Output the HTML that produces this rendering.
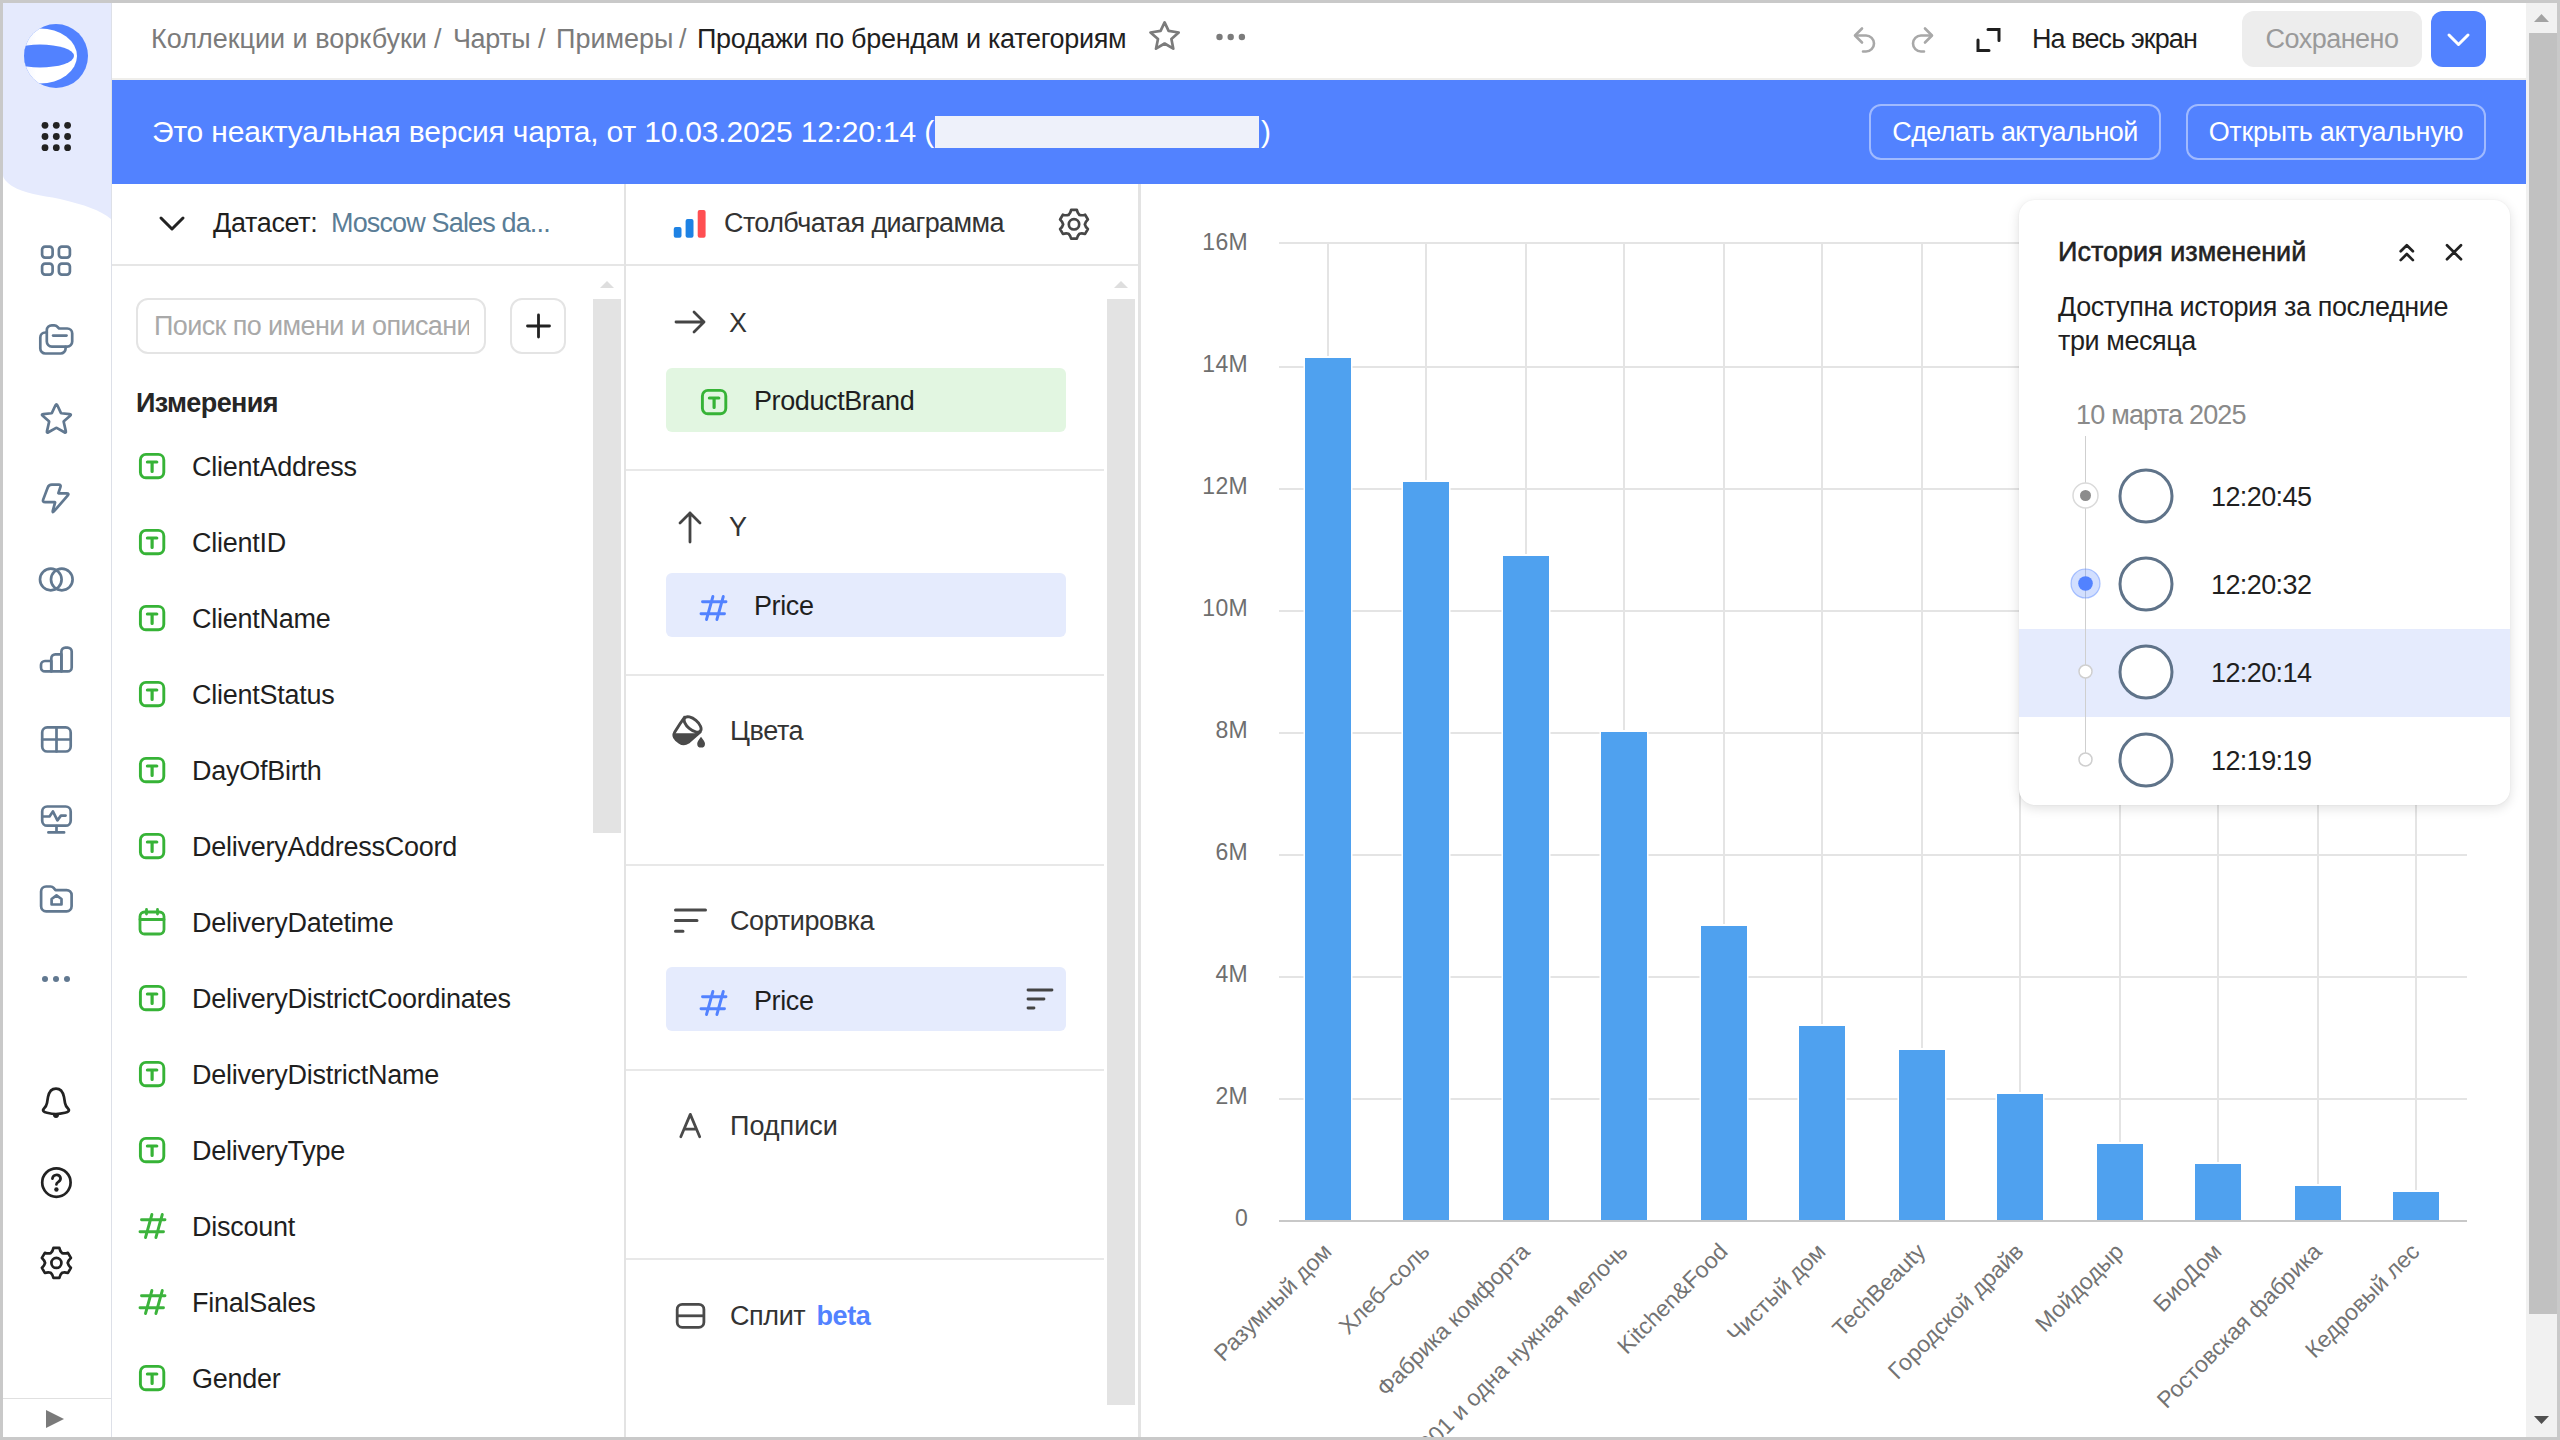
<!DOCTYPE html>
<html><head><meta charset="utf-8">
<style>
*{box-sizing:border-box;margin:0;padding:0}
html,body{width:2560px;height:1440px;overflow:hidden;background:#fff;font-family:"Liberation Sans",sans-serif;color:#1f1f1f;position:relative}
.a{position:absolute}
.t{position:absolute;white-space:nowrap;line-height:32px;font-size:27px}
.ic{position:absolute;overflow:visible}
</style></head><body>
<!-- SIDEBAR -->
<svg class="a" style="left:0;top:0" width="112" height="1440" viewBox="0 0 112 1440">
  <path d="M3,3 H111 V219 C100,210 85,205 60,199 C40,195 25,194 12,186 C6,182 3,178 3,175 Z" fill="#e5eafd"/>
  <rect x="111" y="0" width="1" height="1440" fill="#dde0e8"/>
  <defs>
    <clipPath id="lc"><circle cx="56" cy="56" r="32"/></clipPath>
    <linearGradient id="lg" x1="0" x2="1" y1="0" y2="0"><stop offset="0" stop-color="#dfe7fd"/><stop offset="0.45" stop-color="#fff"/></linearGradient>
  </defs>
  <g clip-path="url(#lc)">
    <rect x="20" y="20" width="72" height="72" fill="#5282ff"/>
    <ellipse cx="40" cy="56" rx="37" ry="27.5" fill="url(#lg)"/>
    <ellipse cx="40" cy="56" rx="34" ry="11.5" fill="#5282ff"/>
  </g>
  <g fill="#222">
    <circle cx="45" cy="125.3" r="3.4"/><circle cx="56.3" cy="125.3" r="3.4"/><circle cx="67.6" cy="125.3" r="3.4"/>
    <circle cx="45" cy="136.5" r="3.4"/><circle cx="56.3" cy="136.5" r="3.4"/><circle cx="67.6" cy="136.5" r="3.4"/>
    <circle cx="45" cy="147.7" r="3.4"/><circle cx="56.3" cy="147.7" r="3.4"/><circle cx="67.6" cy="147.7" r="3.4"/>
  </g>
  <g fill="none" stroke="#617890" stroke-width="2.7" stroke-linecap="round" stroke-linejoin="round">
    <rect x="42.1" y="246.6" width="10.5" height="11" rx="3"/><rect x="58.9" y="246.6" width="11" height="11" rx="3"/>
    <rect x="42.1" y="263.6" width="10.5" height="11" rx="3"/><rect x="58.9" y="263.6" width="11" height="11" rx="3"/>
    <path d="M46.8,332.5 h-1.5 a5,5 0 0 0 -5,5 v11 a5,5 0 0 0 5,5 h15.3 a5,5 0 0 0 5,-5 v-1.7"/>
    <path d="M46.8,330.3 a5,5 0 0 1 5,-5 h2.5 a4,4 0 0 1 3,1.4 l1.8,1.8 h8.1 a5,5 0 0 1 5,5 v8.1 a5,5 0 0 1 -5,5 h-15.4 a5,5 0 0 1 -5,-5 z"/>
    <path d="M53.1,335.6 h13.4"/>
    <path d="M55.47,405.30 Q56.40,403.30 57.33,405.30 L60.87,412.93 Q61.00,413.20 61.30,413.23 L69.61,414.08 Q71.80,414.30 70.15,415.75 L63.83,421.30 Q63.60,421.50 63.67,421.79 L65.81,431.16 Q66.30,433.30 64.39,432.22 L56.66,427.85 Q56.40,427.70 56.14,427.85 L48.41,432.22 Q46.50,433.30 46.99,431.16 L49.13,421.79 Q49.20,421.50 48.97,421.30 L42.65,415.75 Q41.00,414.30 43.19,414.08 L51.50,413.23 Q51.80,413.20 51.93,412.93 Z"/>
    <path d="M47.75,487.41 Q48.80,484.60 51.80,484.60 L58.70,484.60 Q61.20,484.60 60.42,486.97 L58.46,492.93 Q58.30,493.40 58.80,493.40 L66.60,493.40 Q69.60,493.40 67.63,495.66 L54.30,510.96 Q52.00,513.60 52.95,510.23 L55.06,502.68 Q55.20,502.20 54.70,502.20 L45.20,502.20 Q42.20,502.20 43.25,499.39 Z"/>
    <circle cx="50.8" cy="579.5" r="10.8"/><circle cx="61.8" cy="579.5" r="10.8"/>
    <path d="M51.3,671.4 H45 a4,4 0 0 1 -4,-4 v-2.4 a4,4 0 0 1 4,-4 h6.3 z"/>
    <path d="M51.3,671.4 V658.4 a4,4 0 0 1 4,-4 h6.1 V671.4 z"/>
    <path d="M61.4,671.4 V651.6 a4,4 0 0 1 4,-4 h2.3 a4,4 0 0 1 4,4 v15.8 a4,4 0 0 1 -4,4 z"/>
    <rect x="42.2" y="727.4" width="28.5" height="24.1" rx="5"/><path d="M56.5,727.4 v24.1 M42.2,739.5 h28.5"/>
    <rect x="42.2" y="806.5" width="28.5" height="19.2" rx="5"/><path d="M56.5,826 v6 M48.4,832.4 h15.7 M42.5,816.5 h7 l3.4,-5.1 l4.5,9 l3.5,-4.8 h4.7"/>
    <path d="M41.1,891.5 a5,5 0 0 1 5,-5 h4.5 a4,4 0 0 1 3,1.4 l1.9,2.2 h11.1 a5,5 0 0 1 5,5 v11.2 a5,5 0 0 1 -5,5 h-20.5 a5,5 0 0 1 -5,-5 z"/>
    <path d="M51.6,904.5 v-5.5 l4.9,-3.7 l5,3.7 v5.5 z"/>
  </g>
  <g fill="#617890"><circle cx="45" cy="979" r="3"/><circle cx="56" cy="979" r="3"/><circle cx="67" cy="979" r="3"/></g>
  <g fill="none" stroke="#222" stroke-width="2.7" stroke-linecap="round" stroke-linejoin="round">
    <path d="M56,1088.6 C51,1088.6 49,1092 48,1097 L47,1103 C46.5,1106 45,1107.5 44,1108.5 C42,1110.5 43.5,1112 47,1112.8 C50,1113.5 53,1114 56,1114 C59,1114 62,1113.5 65,1112.8 C68.5,1112 70,1110.5 68,1108.5 C67,1107.5 65.5,1106 65,1103 L64,1097 C63,1092 61,1088.6 56,1088.6 Z"/>
    <circle cx="56.4" cy="1182.6" r="14.2"/>
    <path d="M52.4,1178.7 a4.2,4.2 0 0 1 8,-1.3 c0.6,1.9 -0.3,3.3 -2,4.5 c-1.3,0.9 -2,1.4 -2,2.6"/>
    <circle cx="56.4" cy="1262.9" r="5"/>
    <path d="M53.48,1247.88 L59.32,1247.88 C60.00,1251.14 60.00,1251.14 62.05,1253.11 C64.79,1253.90 64.79,1253.90 67.95,1252.86 L70.87,1257.92 C68.38,1260.13 68.38,1260.13 67.70,1262.90 C68.38,1265.67 68.38,1265.67 70.87,1267.88 L67.95,1272.94 C64.79,1271.90 64.79,1271.90 62.05,1272.69 C60.00,1274.66 60.00,1274.66 59.32,1277.92 L53.48,1277.92 C52.80,1274.66 52.80,1274.66 50.75,1272.69 C48.01,1271.90 48.01,1271.90 44.85,1272.94 L41.93,1267.88 C44.42,1265.67 44.42,1265.67 45.10,1262.90 C44.42,1260.13 44.42,1260.13 41.93,1257.92 L44.85,1252.86 C48.01,1253.90 48.01,1253.90 50.75,1253.11 C52.80,1251.14 52.80,1251.14 53.48,1247.88 Z"/>
  </g>
  <path d="M52.5,1114 H59.5 L58.6,1116.6 a3,3 0 0 1 -5.2,0 Z" fill="#222"/>
  <circle cx="56.4" cy="1189.5" r="2.2" fill="#222"/>
  <rect x="3" y="1398" width="108" height="1" fill="#e0e0e0"/>
  <path d="M46,1410 L64,1419 L46,1428 Z" fill="#7a7a7a"/>
</svg>

<!-- TOP BAR -->
<div class="a" style="left:112px;top:78px;width:2414px;height:2px;background:#efeeeb"></div>
<div class="t" style="left:151px;top:23px;color:#7b7b7b;letter-spacing:0px">Коллекции и воркбуки</div>
<div class="t" style="left:434px;top:23px;color:#7b7b7b">/</div>
<div class="t" style="left:453px;top:23px;color:#7b7b7b;letter-spacing:-0.4px">Чарты</div>
<div class="t" style="left:538px;top:23px;color:#7b7b7b">/</div>
<div class="t" style="left:556px;top:23px;color:#7b7b7b;letter-spacing:0px">Примеры</div>
<div class="t" style="left:679px;top:23px;color:#7b7b7b">/</div>
<div class="t" style="left:697px;top:23px;color:#1f1f1f;letter-spacing:-0.3px">Продажи по брендам и категориям</div>


<svg class="ic" style="left:1140px;top:10px" width="120" height="60" viewBox="1140 10 120 60"><path d="M1164.6,22.4 L1168.6,30.9 L1178.7,32.5 L1171.4,39 L1173.3,48.7 L1164.6,43.5 L1156,48.7 L1158,39 L1150.5,32.5 L1160.6,30.9 Z" fill="none" stroke="#7b7b7b" stroke-width="2.7" stroke-linejoin="round"/><circle cx="1219.5" cy="37" r="3.2" fill="#7b7b7b"/><circle cx="1230.7" cy="37" r="3.2" fill="#7b7b7b"/><circle cx="1241.9" cy="37" r="3.2" fill="#7b7b7b"/></svg>
<!-- undo redo fullscreen -->
<svg class="a" style="left:1840px;top:10px" width="180" height="60" viewBox="1840 10 180 60">
 <g fill="none" stroke="#a8a8a8" stroke-width="2.6" stroke-linecap="round" stroke-linejoin="round">
  <path d="M1862,28.5 l-7,7 l7,7"/><path d="M1856,35.5 h10 a8,8 0 0 1 0,16 h-3"/>
  <path d="M1925,28.5 l7,7 l-7,7"/><path d="M1931,35.5 h-10 a8,8 0 0 0 0,16 h3"/>
 </g>
 <g fill="none" stroke="#1f1f1f" stroke-width="3" stroke-linecap="round" stroke-linejoin="miter">
  <path d="M1988,29.5 h11 v11"/><path d="M1978,40 v10.5 h11"/>
 </g>
</svg>
<div class="t" style="left:2032px;top:23px;letter-spacing:-0.9px">На весь экран</div>
<div class="a" style="left:2242px;top:11px;width:180px;height:56px;border-radius:12px;background:#ededed"></div>
<div class="t" style="left:2242px;top:23px;width:180px;text-align:center;color:#9a9a9a;letter-spacing:-0.5px">Сохранено</div>
<div class="a" style="left:2431px;top:11px;width:55px;height:56px;border-radius:12px;background:#5282ff"></div>
<svg class="a" style="left:2431px;top:11px" width="55" height="56"><path d="M18,24 l9.5,9.5 l9.5,-9.5" fill="none" stroke="#fff" stroke-width="3" stroke-linecap="round" stroke-linejoin="round"/></svg>

<!-- BANNER -->
<div class="a" style="left:112px;top:80px;width:2414px;height:104px;background:#5282ff"></div>
<div class="t" style="left:152px;top:115px;font-size:30px;line-height:34px;color:#fff;letter-spacing:-0.18px">Это неактуальная версия чарта, от 10.03.2025 12:20:14 (</div>
<div class="a" style="left:935px;top:116px;width:324px;height:32px;background:#eef1fa"></div>
<div class="t" style="left:1261px;top:115px;font-size:30px;line-height:34px;color:#fff">)</div>
<div class="a" style="left:1869px;top:104px;width:292px;height:56px;border-radius:12px;border:2px solid rgba(255,255,255,0.45)"></div>
<div class="t" style="left:1869px;top:116px;width:292px;text-align:center;color:#fff;letter-spacing:-0.6px">Сделать актуальной</div>
<div class="a" style="left:2186px;top:104px;width:300px;height:56px;border-radius:12px;border:2px solid rgba(255,255,255,0.45)"></div>
<div class="t" style="left:2186px;top:116px;width:300px;text-align:center;color:#fff;letter-spacing:-0.3px">Открыть актуальную</div>


<!-- LEFT PANEL -->
<div class="a" style="left:624px;top:184px;width:2px;height:1253px;background:#e3e3e3"></div>
<div class="a" style="left:112px;top:264px;width:512px;height:2px;background:#e6e6e6"></div>
<svg class="ic" style="left:156px;top:210px" width="32" height="28"><path d="M5,8 L16,19 L27,8" fill="none" stroke="#222" stroke-width="3" stroke-linecap="round" stroke-linejoin="round"/></svg>
<div class="t" style="left:213px;top:207px;letter-spacing:-0.35px">Датасет:</div>
<div class="t" style="left:331px;top:207px;color:#5a7d96;letter-spacing:-0.85px">Moscow Sales da...</div>
<div class="a" style="left:136px;top:298px;width:350px;height:56px;border:2px solid #e4e4e4;border-radius:12px"></div>
<div class="t" style="left:154px;top:310px;color:#a9a9a9;letter-spacing:-0.6px;width:315px;overflow:hidden">Поиск по имени и описани</div>
<div class="a" style="left:510px;top:298px;width:56px;height:56px;border:2px solid #e4e4e4;border-radius:12px"></div>
<svg class="ic" style="left:511px;top:299px" width="55" height="54"><path d="M27.5,16 V38 M16.5,27 H38.5" stroke="#222" stroke-width="2.8" stroke-linecap="round"/></svg>
<div class="a" style="left:593px;top:299px;width:28px;height:534px;background:#e3e3e3"></div>
<svg class="ic" style="left:593px;top:276px" width="28" height="16"><path d="M7,12 L14,5 L21,12 Z" fill="#dedede"/></svg>
<div class="t" style="left:136px;top:387px;font-weight:bold;letter-spacing:-0.6px;color:#262626">Измерения</div>
<svg class="ic" style="left:138px;top:452px" width="28" height="28" viewBox="0 0 28 28"><rect x="2.4" y="2.4" width="23.4" height="23.4" rx="5.5" fill="none" stroke="#36b336" stroke-width="2.9"/><path d="M9.4,10 h9.4 M14.1,10 v9.4" stroke="#36b336" stroke-width="3.2" fill="none" stroke-linecap="round"/></svg>
<div class="t" style="left:192px;letter-spacing:-0.25px;top:451px">ClientAddress</div>
<svg class="ic" style="left:138px;top:528px" width="28" height="28" viewBox="0 0 28 28"><rect x="2.4" y="2.4" width="23.4" height="23.4" rx="5.5" fill="none" stroke="#36b336" stroke-width="2.9"/><path d="M9.4,10 h9.4 M14.1,10 v9.4" stroke="#36b336" stroke-width="3.2" fill="none" stroke-linecap="round"/></svg>
<div class="t" style="left:192px;letter-spacing:-0.25px;top:527px">ClientID</div>
<svg class="ic" style="left:138px;top:604px" width="28" height="28" viewBox="0 0 28 28"><rect x="2.4" y="2.4" width="23.4" height="23.4" rx="5.5" fill="none" stroke="#36b336" stroke-width="2.9"/><path d="M9.4,10 h9.4 M14.1,10 v9.4" stroke="#36b336" stroke-width="3.2" fill="none" stroke-linecap="round"/></svg>
<div class="t" style="left:192px;letter-spacing:-0.25px;top:603px">ClientName</div>
<svg class="ic" style="left:138px;top:680px" width="28" height="28" viewBox="0 0 28 28"><rect x="2.4" y="2.4" width="23.4" height="23.4" rx="5.5" fill="none" stroke="#36b336" stroke-width="2.9"/><path d="M9.4,10 h9.4 M14.1,10 v9.4" stroke="#36b336" stroke-width="3.2" fill="none" stroke-linecap="round"/></svg>
<div class="t" style="left:192px;letter-spacing:-0.25px;top:679px">ClientStatus</div>
<svg class="ic" style="left:138px;top:756px" width="28" height="28" viewBox="0 0 28 28"><rect x="2.4" y="2.4" width="23.4" height="23.4" rx="5.5" fill="none" stroke="#36b336" stroke-width="2.9"/><path d="M9.4,10 h9.4 M14.1,10 v9.4" stroke="#36b336" stroke-width="3.2" fill="none" stroke-linecap="round"/></svg>
<div class="t" style="left:192px;letter-spacing:-0.25px;top:755px">DayOfBirth</div>
<svg class="ic" style="left:138px;top:832px" width="28" height="28" viewBox="0 0 28 28"><rect x="2.4" y="2.4" width="23.4" height="23.4" rx="5.5" fill="none" stroke="#36b336" stroke-width="2.9"/><path d="M9.4,10 h9.4 M14.1,10 v9.4" stroke="#36b336" stroke-width="3.2" fill="none" stroke-linecap="round"/></svg>
<div class="t" style="left:192px;letter-spacing:-0.25px;top:831px">DeliveryAddressCoord</div>
<svg class="ic" style="left:138px;top:908px" width="28" height="28" viewBox="0 0 28 28"><rect x="2" y="4" width="24" height="22" rx="4.5" fill="none" stroke="#3bb33b" stroke-width="2.8"/><path d="M2,11.5 H26 M8.5,1.5 V6 M19.5,1.5 V6" stroke="#3bb33b" stroke-width="2.8" fill="none" stroke-linecap="round"/></svg>
<div class="t" style="left:192px;letter-spacing:-0.25px;top:907px">DeliveryDatetime</div>
<svg class="ic" style="left:138px;top:984px" width="28" height="28" viewBox="0 0 28 28"><rect x="2.4" y="2.4" width="23.4" height="23.4" rx="5.5" fill="none" stroke="#36b336" stroke-width="2.9"/><path d="M9.4,10 h9.4 M14.1,10 v9.4" stroke="#36b336" stroke-width="3.2" fill="none" stroke-linecap="round"/></svg>
<div class="t" style="left:192px;letter-spacing:-0.25px;top:983px">DeliveryDistrictCoordinates</div>
<svg class="ic" style="left:138px;top:1060px" width="28" height="28" viewBox="0 0 28 28"><rect x="2.4" y="2.4" width="23.4" height="23.4" rx="5.5" fill="none" stroke="#36b336" stroke-width="2.9"/><path d="M9.4,10 h9.4 M14.1,10 v9.4" stroke="#36b336" stroke-width="3.2" fill="none" stroke-linecap="round"/></svg>
<div class="t" style="left:192px;letter-spacing:-0.25px;top:1059px">DeliveryDistrictName</div>
<svg class="ic" style="left:138px;top:1136px" width="28" height="28" viewBox="0 0 28 28"><rect x="2.4" y="2.4" width="23.4" height="23.4" rx="5.5" fill="none" stroke="#36b336" stroke-width="2.9"/><path d="M9.4,10 h9.4 M14.1,10 v9.4" stroke="#36b336" stroke-width="3.2" fill="none" stroke-linecap="round"/></svg>
<div class="t" style="left:192px;letter-spacing:-0.25px;top:1135px">DeliveryType</div>
<svg class="ic" style="left:137px;top:1209px" width="30" height="30" viewBox="0 0 30 30"><path d="M14.9,5.5 L8.5,28.5 M25.3,5.5 L18.9,28.5 M4.5,10.8 H28 M3,22.8 H26.5" stroke="#3bb33b" stroke-width="2.9" fill="none" stroke-linecap="round"/></svg>
<div class="t" style="left:192px;letter-spacing:-0.25px;top:1211px">Discount</div>
<svg class="ic" style="left:137px;top:1285px" width="30" height="30" viewBox="0 0 30 30"><path d="M14.9,5.5 L8.5,28.5 M25.3,5.5 L18.9,28.5 M4.5,10.8 H28 M3,22.8 H26.5" stroke="#3bb33b" stroke-width="2.9" fill="none" stroke-linecap="round"/></svg>
<div class="t" style="left:192px;letter-spacing:-0.25px;top:1287px">FinalSales</div>
<svg class="ic" style="left:138px;top:1364px" width="28" height="28" viewBox="0 0 28 28"><rect x="2.4" y="2.4" width="23.4" height="23.4" rx="5.5" fill="none" stroke="#36b336" stroke-width="2.9"/><path d="M9.4,10 h9.4 M14.1,10 v9.4" stroke="#36b336" stroke-width="3.2" fill="none" stroke-linecap="round"/></svg>
<div class="t" style="left:192px;letter-spacing:-0.25px;top:1363px">Gender</div>

<!-- MIDDLE PANEL -->
<div class="a" style="left:1138px;top:184px;width:3px;height:1253px;background:#e3e3e3"></div>
<div class="a" style="left:626px;top:264px;width:512px;height:2px;background:#e6e6e6"></div>
<svg class="ic" style="left:660px;top:195px" width="60" height="60"><rect x="13.75" y="32.1" width="7.75" height="10.6" rx="2" fill="#1e82e4"/><rect x="25.6" y="24.1" width="7.9" height="18.6" rx="2" fill="#1e82e4"/><rect x="37.7" y="15" width="7.9" height="27.7" rx="2" fill="#ff4f52"/></svg>
<div class="t" style="left:724px;top:207px;color:#333;letter-spacing:-0.6px">Столбчатая диаграмма</div>
<svg class="ic" style="left:1040px;top:190px" width="70" height="70" viewBox="1040 190 70 70"><g fill="none" stroke="#474747" stroke-width="2.7" stroke-linejoin="round"><circle cx="1074" cy="224.3" r="5.2"/><path d="M1071.20,209.88 L1076.80,209.88 C1077.45,213.01 1077.45,213.01 1079.42,214.91 C1082.05,215.66 1082.05,215.66 1085.09,214.66 L1087.89,219.52 C1085.51,221.64 1085.51,221.64 1084.85,224.30 C1085.51,226.96 1085.51,226.96 1087.89,229.08 L1085.09,233.94 C1082.05,232.94 1082.05,232.94 1079.42,233.69 C1077.45,235.59 1077.45,235.59 1076.80,238.72 L1071.20,238.72 C1070.55,235.59 1070.55,235.59 1068.58,233.69 C1065.95,232.94 1065.95,232.94 1062.91,233.94 L1060.11,229.08 C1062.49,226.96 1062.49,226.96 1063.15,224.30 C1062.49,221.64 1062.49,221.64 1060.11,219.52 L1062.91,214.66 C1065.95,215.66 1065.95,215.66 1068.58,214.91 C1070.55,213.01 1070.55,213.01 1071.20,209.88 Z"/></g></svg>
<div class="a" style="left:1107px;top:299px;width:28px;height:1106px;background:#e3e3e3"></div>
<svg class="ic" style="left:1107px;top:276px" width="28" height="16"><path d="M7,12 L14,5 L21,12 Z" fill="#dedede"/></svg>

<svg class="ic" style="left:672px;top:307px" width="36" height="30"><path d="M4,15 H32 M22,5 L32,15 L22,25" fill="none" stroke="#444" stroke-width="2.8" stroke-linecap="round" stroke-linejoin="round"/></svg>
<div class="t" style="left:729px;top:307px;color:#333">X</div>
<div class="a" style="left:666px;top:368px;width:400px;height:64px;border-radius:6px;background:#e2f6e1"></div>
<svg class="ic" style="left:700px;top:388px" width="28" height="28" viewBox="0 0 28 28"><rect x="2.4" y="2.4" width="23.4" height="23.4" rx="5.5" fill="none" stroke="#36b336" stroke-width="2.9"/><path d="M9.4,10 h9.4 M14.1,10 v9.4" stroke="#36b336" stroke-width="3.2" fill="none" stroke-linecap="round"/></svg>
<div class="t" style="left:754px;top:385px;letter-spacing:-0.4px">ProductBrand</div>
<div class="a" style="left:626px;top:469px;width:478px;height:2px;background:#e8e8e8"></div>

<svg class="ic" style="left:675px;top:509px" width="30" height="36"><path d="M15,33 V4 M5,14 L15,4 L25,14" fill="none" stroke="#444" stroke-width="2.8" stroke-linecap="round" stroke-linejoin="round"/></svg>
<div class="t" style="left:729px;top:511px;color:#333">Y</div>
<div class="a" style="left:666px;top:573px;width:400px;height:64px;border-radius:6px;background:#e5ebfd"></div>
<svg class="ic" style="left:698px;top:591px" width="30" height="30" viewBox="0 0 30 30"><path d="M14.9,5.5 L8.5,28.5 M25.3,5.5 L18.9,28.5 M4.5,10.8 H28 M3,22.8 H26.5" stroke="#5282ff" stroke-width="2.9" fill="none" stroke-linecap="round"/></svg>
<div class="t" style="left:754px;top:590px;letter-spacing:-0.4px">Price</div>
<div class="a" style="left:626px;top:674px;width:478px;height:2px;background:#e8e8e8"></div>

<svg class="ic" style="left:660px;top:700px" width="60" height="60" viewBox="0 0 60 60"><g fill="none" stroke="#4a4a4a" stroke-width="2.9" stroke-linejoin="round"><ellipse cx="32.6" cy="24.4" rx="10.2" ry="5.2" transform="rotate(40 32.6 24.4)"/><path d="M25.2,16.3 C21,22 17.5,27.5 14.8,32 C13.2,34.8 13.6,37.2 16,39.5 L19.5,42.3 C22.3,44.4 25.3,44.3 28.2,42.4 L40.8,31.5"/></g><path d="M15.2,33.3 H34 L39.5,32.6 L28.2,42.4 C25.3,44.3 22.3,44.4 19.5,42.3 L16,39.5 C13.8,37.4 13.6,35.2 15.2,33.3 Z" fill="#4a4a4a"/><path d="M41,36.7 C39.5,39 37.2,41.5 37.2,43.7 a3.9,3.9 0 0 0 7.8,0 C45,41.5 42.5,39 41,36.7 Z" fill="#4a4a4a"/></svg>
<div class="t" style="left:730px;top:715px;color:#333;letter-spacing:-0.4px">Цвета</div>
<div class="a" style="left:626px;top:864px;width:478px;height:2px;background:#e8e8e8"></div>

<svg class="ic" style="left:660px;top:890px" width="60" height="60" viewBox="660 890 60 60"><path d="M675.5,910 H705.5 M675.5,920.5 H697 M675.5,931.3 H683" fill="none" stroke="#4a4a4a" stroke-width="3" stroke-linecap="round"/></svg>
<div class="t" style="left:730px;top:905px;color:#333;letter-spacing:-0.4px">Сортировка</div>
<div class="a" style="left:666px;top:967px;width:400px;height:64px;border-radius:6px;background:#e5ebfd"></div>
<svg class="ic" style="left:698px;top:986px" width="30" height="30" viewBox="0 0 30 30"><path d="M14.9,5.5 L8.5,28.5 M25.3,5.5 L18.9,28.5 M4.5,10.8 H28 M3,22.8 H26.5" stroke="#5282ff" stroke-width="2.9" fill="none" stroke-linecap="round"/></svg>
<div class="t" style="left:754px;top:985px;letter-spacing:-0.4px">Price</div>
<svg class="ic" style="left:1026px;top:987px" width="28" height="24"><path d="M2,3 H26 M2,12 H18 M2,21 H8" fill="none" stroke="#444" stroke-width="2.8" stroke-linecap="round"/></svg>
<div class="a" style="left:626px;top:1069px;width:478px;height:2px;background:#e8e8e8"></div>

<svg class="ic" style="left:660px;top:1100px" width="60" height="60" viewBox="660 1100 60 60"><path d="M680.8,1136.8 L690.3,1114.4 L699.7,1136.8 M684.3,1129.2 H696.3" fill="none" stroke="#4a4a4a" stroke-width="2.8" stroke-linecap="round" stroke-linejoin="round"/></svg>
<div class="t" style="left:730px;top:1110px;color:#333;letter-spacing:0px">Подписи</div>
<div class="a" style="left:626px;top:1258px;width:478px;height:2px;background:#e8e8e8"></div>

<svg class="ic" style="left:660px;top:1290px" width="60" height="50" viewBox="660 1290 60 50"><rect x="677.2" y="1304.4" width="26.7" height="22.9" rx="5" fill="none" stroke="#4a4a4a" stroke-width="2.8"/><path d="M677.2,1315.8 H703.9" stroke="#4a4a4a" stroke-width="2.8"/></svg>
<div class="t" style="left:730px;top:1300px;color:#333;letter-spacing:-0.4px">Сплит <b style="color:#5282ff;margin-left:4px">beta</b></div>


<!-- CHART -->
<svg class="a" style="left:0;top:0" width="2560" height="1440" viewBox="0 0 2560 1440">
<rect x="1279" y="242" width="1188" height="2" fill="#e4e4e4"/><rect x="1279" y="366" width="1188" height="2" fill="#e4e4e4"/><rect x="1279" y="488" width="1188" height="2" fill="#e4e4e4"/><rect x="1279" y="610" width="1188" height="2" fill="#e4e4e4"/><rect x="1279" y="732" width="1188" height="2" fill="#e4e4e4"/><rect x="1279" y="854" width="1188" height="2" fill="#e4e4e4"/><rect x="1279" y="976" width="1188" height="2" fill="#e4e4e4"/><rect x="1279" y="1098" width="1188" height="2" fill="#e4e4e4"/><rect x="1327" y="244" width="2" height="976" fill="#e4e4e4"/><rect x="1425" y="244" width="2" height="976" fill="#e4e4e4"/><rect x="1525" y="244" width="2" height="976" fill="#e4e4e4"/><rect x="1623" y="244" width="2" height="976" fill="#e4e4e4"/><rect x="1723" y="244" width="2" height="976" fill="#e4e4e4"/><rect x="1821" y="244" width="2" height="976" fill="#e4e4e4"/><rect x="1921" y="244" width="2" height="976" fill="#e4e4e4"/><rect x="2019" y="244" width="2" height="976" fill="#e4e4e4"/><rect x="2119" y="244" width="2" height="976" fill="#e4e4e4"/><rect x="2217" y="244" width="2" height="976" fill="#e4e4e4"/><rect x="2317" y="244" width="2" height="976" fill="#e4e4e4"/><rect x="2415" y="244" width="2" height="976" fill="#e4e4e4"/>
<rect x="1303.5" y="356" width="49" height="864" fill="#fff"/><rect x="1305" y="358" width="46" height="862" fill="#4fa1ef"/>
<rect x="1401.5" y="480" width="49" height="740" fill="#fff"/><rect x="1403" y="482" width="46" height="738" fill="#4fa1ef"/>
<rect x="1501.5" y="554" width="49" height="666" fill="#fff"/><rect x="1503" y="556" width="46" height="664" fill="#4fa1ef"/>
<rect x="1599.5" y="730" width="49" height="490" fill="#fff"/><rect x="1601" y="732" width="46" height="488" fill="#4fa1ef"/>
<rect x="1699.5" y="924" width="49" height="296" fill="#fff"/><rect x="1701" y="926" width="46" height="294" fill="#4fa1ef"/>
<rect x="1797.5" y="1024" width="49" height="196" fill="#fff"/><rect x="1799" y="1026" width="46" height="194" fill="#4fa1ef"/>
<rect x="1897.5" y="1048" width="49" height="172" fill="#fff"/><rect x="1899" y="1050" width="46" height="170" fill="#4fa1ef"/>
<rect x="1995.5" y="1092" width="49" height="128" fill="#fff"/><rect x="1997" y="1094" width="46" height="126" fill="#4fa1ef"/>
<rect x="2095.5" y="1142" width="49" height="78" fill="#fff"/><rect x="2097" y="1144" width="46" height="76" fill="#4fa1ef"/>
<rect x="2193.5" y="1162" width="49" height="58" fill="#fff"/><rect x="2195" y="1164" width="46" height="56" fill="#4fa1ef"/>
<rect x="2293.5" y="1184" width="49" height="36" fill="#fff"/><rect x="2295" y="1186" width="46" height="34" fill="#4fa1ef"/>
<rect x="2391.5" y="1190" width="49" height="30" fill="#fff"/><rect x="2393" y="1192" width="46" height="28" fill="#4fa1ef"/>
<rect x="1279" y="1220" width="1188" height="2" fill="#c8c8c8"/>
<text x="1248" y="250.3" text-anchor="end" font-size="23" fill="#6f6f6f" letter-spacing="0.3" font-family="Liberation Sans">16M</text>
<text x="1248" y="372.3" text-anchor="end" font-size="23" fill="#6f6f6f" letter-spacing="0.3" font-family="Liberation Sans">14M</text>
<text x="1248" y="494.3" text-anchor="end" font-size="23" fill="#6f6f6f" letter-spacing="0.3" font-family="Liberation Sans">12M</text>
<text x="1248" y="616.3" text-anchor="end" font-size="23" fill="#6f6f6f" letter-spacing="0.3" font-family="Liberation Sans">10M</text>
<text x="1248" y="738.3" text-anchor="end" font-size="23" fill="#6f6f6f" letter-spacing="0.3" font-family="Liberation Sans">8M</text>
<text x="1248" y="860.3" text-anchor="end" font-size="23" fill="#6f6f6f" letter-spacing="0.3" font-family="Liberation Sans">6M</text>
<text x="1248" y="982.3" text-anchor="end" font-size="23" fill="#6f6f6f" letter-spacing="0.3" font-family="Liberation Sans">4M</text>
<text x="1248" y="1104.3" text-anchor="end" font-size="23" fill="#6f6f6f" letter-spacing="0.3" font-family="Liberation Sans">2M</text>
<text x="1248" y="1226" text-anchor="end" font-size="23" fill="#6f6f6f" letter-spacing="0.3" font-family="Liberation Sans">0</text>
<text x="1333" y="1253" text-anchor="end" font-size="23" fill="#737373" font-family="Liberation Sans" transform="rotate(-45 1333 1253)">Разумный дом</text>
<text x="1431" y="1253" text-anchor="end" font-size="23" fill="#737373" font-family="Liberation Sans" transform="rotate(-45 1431 1253)">Хлеб–соль</text>
<text x="1531" y="1253" text-anchor="end" font-size="23" fill="#737373" font-family="Liberation Sans" transform="rotate(-45 1531 1253)">Фабрика комфорта</text>
<text x="1629" y="1253" text-anchor="end" font-size="23" fill="#737373" font-family="Liberation Sans" transform="rotate(-45 1629 1253)">1001 и одна нужная мелочь</text>
<text x="1729" y="1253" text-anchor="end" font-size="23" fill="#737373" font-family="Liberation Sans" transform="rotate(-45 1729 1253)">Kitchen&amp;Food</text>
<text x="1827" y="1253" text-anchor="end" font-size="23" fill="#737373" font-family="Liberation Sans" transform="rotate(-45 1827 1253)">Чистый дом</text>
<text x="1927" y="1253" text-anchor="end" font-size="23" fill="#737373" font-family="Liberation Sans" transform="rotate(-45 1927 1253)">TechBeauty</text>
<text x="2025" y="1253" text-anchor="end" font-size="23" fill="#737373" font-family="Liberation Sans" transform="rotate(-45 2025 1253)">Городской драйв</text>
<text x="2125" y="1253" text-anchor="end" font-size="23" fill="#737373" font-family="Liberation Sans" transform="rotate(-45 2125 1253)">Мойдодыр</text>
<text x="2223" y="1253" text-anchor="end" font-size="23" fill="#737373" font-family="Liberation Sans" transform="rotate(-45 2223 1253)">БиоДом</text>
<text x="2323" y="1253" text-anchor="end" font-size="23" fill="#737373" font-family="Liberation Sans" transform="rotate(-45 2323 1253)">Ростовская фабрика</text>
<text x="2421" y="1253" text-anchor="end" font-size="23" fill="#737373" font-family="Liberation Sans" transform="rotate(-45 2421 1253)">Кедровый лес</text>
</svg>

<!-- HISTORY PANEL -->
<div class="a" style="left:2019px;top:200px;width:491px;height:605px;background:#fff;border-radius:16px;box-shadow:0 3px 12px rgba(0,0,0,0.13), 0 0 2px rgba(0,0,0,0.05)"></div>
<div class="t" style="left:2058px;top:236px;-webkit-text-stroke:0.55px #222;color:#222;letter-spacing:0px">История изменений</div>
<svg class="ic" style="left:2380px;top:230px" width="100" height="50" viewBox="2380 230 100 50"><path d="M2400.7,251.3 L2406.8,245.2 L2412.9,251.3 M2400.7,260.1 L2406.8,254 L2412.9,260.1 M2447,245.2 L2461,259.3 M2461,245.2 L2447,259.3" fill="none" stroke="#222" stroke-width="2.7" stroke-linecap="round" stroke-linejoin="round"/></svg>
<div class="t" style="left:2058px;top:290px;letter-spacing:-0.42px;line-height:34px">Доступна история за последние<br>три месяца</div>
<div class="t" style="left:2076px;top:399px;color:#8a8a8a;letter-spacing:-0.8px">10 марта 2025</div>
<div class="a" style="left:2019px;top:629px;width:491px;height:88px;background:#e5ebfd"></div>
<div class="a" style="left:2085px;top:436px;width:1px;height:323px;background:#cfcfcf"></div>
<svg class="a" style="left:2019px;top:440px" width="160" height="360" viewBox="2019 440 160 360">
  <circle cx="2085.5" cy="495.5" r="12.5" fill="#fff" stroke="#dadada" stroke-width="1.5"/>
  <circle cx="2085.5" cy="495.5" r="5.5" fill="#8c8c8c"/>
  <circle cx="2085.5" cy="583.5" r="14.5" fill="rgba(82,130,255,0.26)" stroke="rgba(82,130,255,0.45)" stroke-width="1.2"/>
  <circle cx="2085.5" cy="583.5" r="7.3" fill="#5282ff"/>
  <circle cx="2085.5" cy="671.5" r="6.5" fill="#fff" stroke="#cfcfcf" stroke-width="1.5"/>
  <circle cx="2085.5" cy="759.5" r="6.5" fill="#fff" stroke="#cfcfcf" stroke-width="1.5"/>
  <g fill="none" stroke="#5f7389" stroke-width="3">
   <circle cx="2146" cy="496" r="26" fill="#fff"/><circle cx="2146" cy="584" r="26" fill="#fff"/><circle cx="2146" cy="672" r="26" fill="#fff"/><circle cx="2146" cy="760" r="26" fill="#fff"/>
  </g>
</svg>
<div class="t" style="left:2211px;top:481px;letter-spacing:-0.6px">12:20:45</div>
<div class="t" style="left:2211px;top:569px;letter-spacing:-0.6px">12:20:32</div>
<div class="t" style="left:2211px;top:657px;letter-spacing:-0.6px">12:20:14</div>
<div class="t" style="left:2211px;top:745px;letter-spacing:-0.6px">12:19:19</div>

<!-- right scrollbar -->
<div class="a" style="left:2526px;top:3px;width:31px;height:1434px;background:#f1f1f1"></div>
<div class="a" style="left:2529px;top:33px;width:28px;height:1281px;background:#c1c1c1"></div>
<svg class="a" style="left:2526px;top:3px" width="31" height="1434"><path d="M8,19 L15.5,11 L23,19 Z" fill="#a3a3a3"/><path d="M8,1413 L15.5,1421 L23,1413 Z" fill="#505050"/></svg>

<!-- page border -->
<div class="a" style="left:0;top:0;width:2560px;height:3px;background:#c9c9c9"></div>
<div class="a" style="left:0;top:1437px;width:2560px;height:3px;background:#c9c9c9"></div>
<div class="a" style="left:0;top:0;width:3px;height:1440px;background:#c9c9c9"></div>
<div class="a" style="left:2557px;top:0;width:3px;height:1440px;background:#c9c9c9"></div>
</body></html>
